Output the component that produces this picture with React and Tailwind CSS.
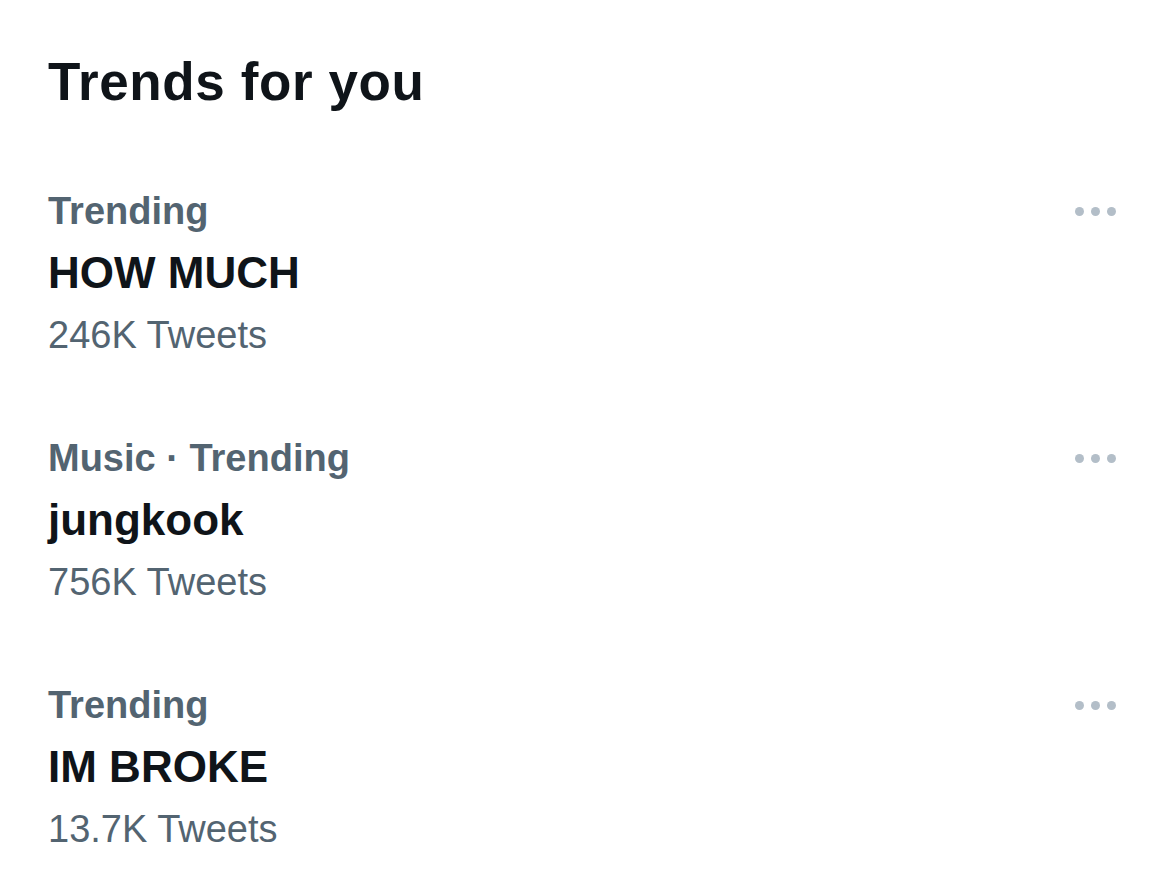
import React from 'react';

const trends = [
  { category: 'Trending', topic: 'HOW MUCH', count: '246K Tweets' },
  { category: 'Music · Trending', topic: 'jungkook', count: '756K Tweets' },
  { category: 'Trending', topic: 'IM BROKE', count: '13.7K Tweets' },
];

function MoreDots() {
  return (
    <div className="flex items-center gap-[7px] h-[62px]">
      <span className="w-[9px] h-[9px] rounded-full bg-[#b3bec8]" />
      <span className="w-[9px] h-[9px] rounded-full bg-[#b3bec8]" />
      <span className="w-[9px] h-[9px] rounded-full bg-[#b3bec8]" />
    </div>
  );
}

export default function App() {
  return (
    <div
      className="w-[1170px] h-[881px] bg-white pl-[48px] pr-[54px] pt-[51px] overflow-hidden"
      style={{ fontFamily: '"Liberation Sans", Arial, sans-serif' }}
    >
      <h2 className="text-[53px] leading-[62px] font-bold text-[#0f1419] tracking-[0.6px]">Trends for you</h2>

      <div className="mt-[67px] flex flex-col gap-[61px]">
        {trends.map((t, i) => (
          <div key={i} className="flex justify-between items-start">
            <div className="flex flex-col">
              <span className="text-[38px] leading-[62px] font-bold text-[#536471]">{t.category}</span>
              <span className="text-[44px] leading-[62px] font-bold text-[#0f1419]">{t.topic}</span>
              <span className="text-[38px] leading-[62px] text-[#536471]">{t.count}</span>
            </div>
            <MoreDots />
          </div>
        ))}
      </div>
    </div>
  );
}
